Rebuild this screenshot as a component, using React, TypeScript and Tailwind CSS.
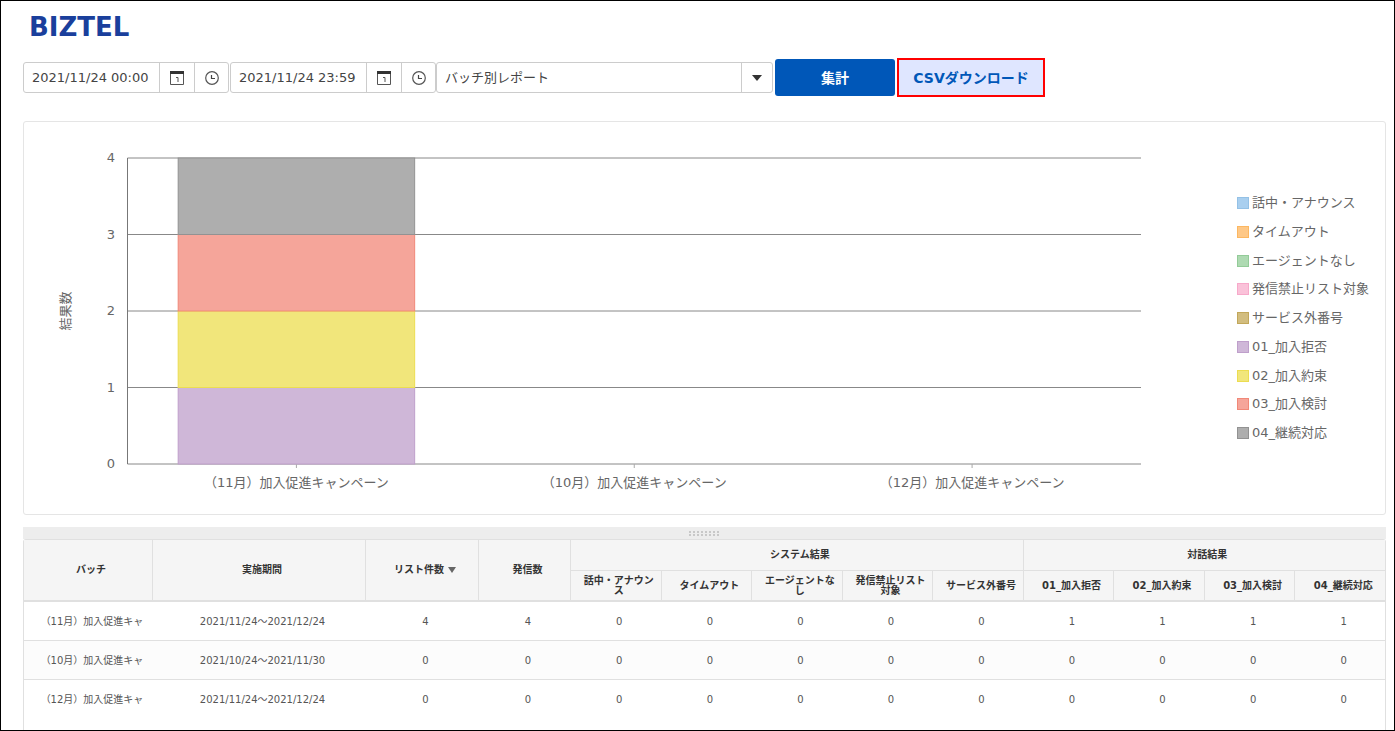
import { useState } from "react";

const series = [
  { name: "話中・アナウンス", fill: "#a9cfef", stroke: "#94c1e6" },
  { name: "タイムアウト", fill: "#fec887", stroke: "#fcb761" },
  { name: "エージェントなし", fill: "#aedab2", stroke: "#93cb98" },
  { name: "発信禁止リスト対象", fill: "#fac2d9", stroke: "#f7a9ca" },
  { name: "サービス外番号", fill: "#d2bd7f", stroke: "#c2a75a" },
  { name: "01_加入拒否", fill: "#cfb7d8", stroke: "#bf9fcb" },
  { name: "02_加入約束", fill: "#f1e67b", stroke: "#ecdd51" },
  { name: "03_加入検討", fill: "#f5a59a", stroke: "#f18878" },
  { name: "04_継続対応", fill: "#aeaeae", stroke: "#929292" },
];

const batches = [
  {
    label: "（11月）加入促進キャンペーン",
    short: "（11月）加入促進キャ",
    period: "2021/11/24～2021/12/24",
    listCount: 4,
    callCount: 4,
    results: [0, 0, 0, 0, 0, 1, 1, 1, 1],
  },
  {
    label: "（10月）加入促進キャンペーン",
    short: "（10月）加入促進キャ",
    period: "2021/10/24～2021/11/30",
    listCount: 0,
    callCount: 0,
    results: [0, 0, 0, 0, 0, 0, 0, 0, 0],
  },
  {
    label: "（12月）加入促進キャンペーン",
    short: "（12月）加入促進キャ",
    period: "2021/11/24～2021/12/24",
    listCount: 0,
    callCount: 0,
    results: [0, 0, 0, 0, 0, 0, 0, 0, 0],
  },
];

function CalendarIcon() {
  return (
    <svg width="14" height="14" viewBox="0 0 14 14" fill="none" aria-hidden="true">
      <path d="M0.5 0.5h13v13h-13z" stroke="#555" />
      <path d="M0 0h14v3H0z" fill="#333" />
      <path d="M6 6.5h2v4.5" stroke="#555" />
    </svg>
  );
}

function ClockIcon() {
  return (
    <svg width="14" height="14" viewBox="0 0 14 14" fill="none" aria-hidden="true">
      <circle cx="7" cy="7" r="6.3" stroke="#555" strokeWidth="1.2" />
      <path d="M6.5 4v3.5h3.5" stroke="#444" strokeWidth="1.2" />
    </svg>
  );
}

function DateTimeField({ label, initial }: { label: string; initial: string }) {
  const [value, setValue] = useState(initial);

  return (
    <div className="flex h-[31px] w-[206px] rounded-[3px] border border-[#ccc] bg-white">
      <input
        type="text"
        aria-label={label}
        value={value}
        onChange={(e) => setValue(e.target.value)}
        className="min-w-0 flex-1 pl-2 text-[13px] text-[#444] outline-none"
      />
      <button
        type="button"
        aria-label={`${label} 日付`}
        className="flex w-[35px] items-center justify-center border-l border-[#ccc]"
      >
        <CalendarIcon />
      </button>
      <button
        type="button"
        aria-label={`${label} 時刻`}
        className="flex w-[34px] items-center justify-center border-l border-[#ccc]"
      >
        <ClockIcon />
      </button>
    </div>
  );
}

// plot area of the stacked bar chart, in svg units
const plot = { left: 103.5, right: 1117, top: 36, bottom: 342 };
const maxValue = 4;
const unit = (plot.bottom - plot.top) / maxValue;
const slot = (plot.right - plot.left) / batches.length;

function ResultChart() {
  return (
    <svg
      viewBox="0 0 1213 392"
      className="block min-w-0 flex-1 text-[13px]"
      role="img"
      aria-label="結果数"
    >
      {[0, 1, 2, 3, 4].map((n) => {
        const y = plot.bottom - n * unit;
        return (
          <g key={n}>
            <line x1={plot.left} x2={plot.right} y1={y} y2={y} stroke="#888" />
            <text x="91" y={y + 4} textAnchor="end" fill="#666">
              {n}
            </text>
          </g>
        );
      })}
      <line
        x1={plot.left}
        x2={plot.left}
        y1={plot.top}
        y2={plot.bottom}
        stroke="#777"
      />
      {batches.map((batch, i) => {
        const center = plot.left + slot * (i + 0.5);
        const width = slot * 0.7;
        let total = 0;
        return (
          <g key={batch.label}>
            <line
              x1={center}
              x2={center}
              y1={plot.bottom}
              y2={plot.bottom + 4}
              stroke="#aaa"
            />
            {batch.results.map((count, s) => {
              if (count === 0) return null;
              total += count;
              return (
                <rect
                  key={series[s].name}
                  x={center - width / 2}
                  y={plot.bottom - total * unit}
                  width={width}
                  height={count * unit}
                  fill={series[s].fill}
                  stroke={series[s].stroke}
                />
              );
            })}
            <text
              x={center}
              y={plot.bottom + 23}
              textAnchor="middle"
              fill="#666"
            >
              {batch.label}
            </text>
          </g>
        );
      })}
      <text
        transform="translate(46 189) rotate(-90)"
        textAnchor="middle"
        fill="#666"
      >
        結果数
      </text>
    </svg>
  );
}

function Legend() {
  return (
    <ul className="flex h-[246px] w-[148px] shrink-0 flex-col justify-between">
      {series.map((s) => (
        <li
          key={s.name}
          className="flex items-center gap-[3px] text-[13px] leading-4 whitespace-nowrap text-[#666]"
        >
          <span
            className="h-3 w-3 border"
            style={{ backgroundColor: s.fill, borderColor: s.stroke }}
          />
          {s.name}
        </li>
      ))}
    </ul>
  );
}

function ResultTable() {
  const th = "border-l border-[#e0e0e0] pl-1.5 first:border-l-0 font-bold";

  return (
    <table className="w-full table-fixed border-separate border-spacing-0 text-center text-[10px]">
      <colgroup>
        <col className="w-[128px]" />
        <col className="w-[213px]" />
        <col className="w-[113px]" />
        <col className="w-[92px]" />
        {series.map((s) => (
          <col key={s.name} />
        ))}
      </colgroup>
      <thead className="bg-[#f5f5f5] leading-[10px] text-[#333]">
        <tr className="h-[30px]">
          <th rowSpan={2} className={`${th} border-b-2`}>
            バッチ
          </th>
          <th rowSpan={2} className={`${th} border-b-2`}>
            実施期間
          </th>
          <th rowSpan={2} className={`${th} border-b-2`} aria-sort="descending">
            <button type="button" className="inline-flex items-center gap-1">
              リスト件数
              <svg width="8" height="6" viewBox="0 0 8 6" aria-hidden="true">
                <path d="M0 0h8l-4 6z" fill="#666" />
              </svg>
            </button>
          </th>
          <th rowSpan={2} className={`${th} border-b-2`}>
            発信数
          </th>
          <th colSpan={5} className={th}>
            システム結果
          </th>
          <th colSpan={4} className={th}>
            対話結果
          </th>
        </tr>
        <tr className="h-8">
          {series.map((s) => (
            <th
              key={s.name}
              className="border-t border-b-2 border-l border-[#e0e0e0] pr-1.5 pl-3 font-bold"
            >
              {s.name}
            </th>
          ))}
        </tr>
      </thead>
      <tbody className="text-[#555]">
        {batches.map((batch) => (
          <tr
            key={batch.label}
            className="h-[39px] even:bg-[#fcfcfc] [&:not(:last-child)>td]:border-b [&>td]:border-[#e0e0e0] [&>td]:pl-2"
          >
            <td className="whitespace-nowrap" title={batch.label}>
              {batch.short}
            </td>
            <td>{batch.period}</td>
            <td>{batch.listCount}</td>
            <td>{batch.callCount}</td>
            {batch.results.map((count, i) => (
              <td key={series[i].name}>{count}</td>
            ))}
          </tr>
        ))}
      </tbody>
    </table>
  );
}

export default function App() {
  return (
    <div
      lang="ja"
      className="flex min-h-screen flex-col border border-black bg-white pr-2 pl-[22px] font-['DejaVu_Sans','Noto_Sans_CJK_JP',sans-serif]"
    >
      <header className="flex h-[57px] items-start pt-[10px] pl-1.5">
        <h1 className="text-[26px] leading-8 font-bold text-[#1a3f9c]">
          BIZTEL
        </h1>
      </header>

      <form
        className="flex h-[39px] items-center"
        onSubmit={(e) => e.preventDefault()}
      >
        <DateTimeField label="開始日時" initial="2021/11/24 00:00" />
        <div className="ml-px">
          <DateTimeField label="終了日時" initial="2021/11/24 23:59" />
        </div>
        <div className="relative h-[31px] w-[337px] rounded-[3px] border border-[#ccc]">
          <select
            aria-label="レポート種別"
            className="h-full w-full appearance-none pl-2 text-[13px] text-[#444] outline-none"
          >
            <option>バッチ別レポート</option>
          </select>
          <span className="pointer-events-none absolute inset-y-0 right-0 flex w-[31px] items-center justify-center border-l border-[#ccc]">
            <svg width="10" height="6" viewBox="0 0 10 6" aria-hidden="true">
              <path d="M0 0h10l-5 6z" fill="#333" />
            </svg>
          </span>
        </div>
        <button
          type="submit"
          className="ml-0.5 h-[37px] w-[120px] rounded-[3px] bg-[#0057b8] text-sm font-bold text-white"
        >
          集計
        </button>
        <button
          type="button"
          className="ml-0.5 h-[39px] w-[148px] border-2 border-[#f00] bg-[#dfe6ff] text-sm font-bold text-[#0057b8]"
        >
          CSVダウンロード
        </button>
      </form>

      <section className="mt-6 flex items-center rounded-[3px] border border-[#e5e5e5]">
        <ResultChart />
        <Legend />
      </section>

      <div
        role="separator"
        className="mt-3 flex h-3 shrink-0 items-center justify-center bg-[#ededed]"
      >
        <svg width="31" height="5" viewBox="0 0 31 5" aria-hidden="true">
          {Array.from({ length: 8 }, (_, i) => (
            <path
              key={i}
              d={`M${i * 4} 0h2v2h-2zM${i * 4} 3h2v2h-2z`}
              fill="#c8c8c8"
            />
          ))}
        </svg>
      </div>

      <section className="flex-1 rounded-t-[3px] border-x border-t border-[#e0e0e0]">
        <ResultTable />
      </section>
    </div>
  );
}
